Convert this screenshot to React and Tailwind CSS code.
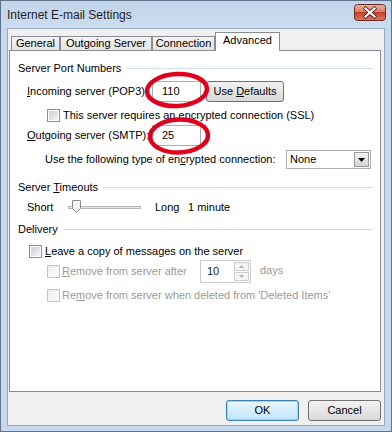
import React from "react";

function Check({ disabled }) {
  if (disabled) {
    return (
      <span className="inline-block w-[13px] h-[13px] border border-[#c4c4c4] bg-gradient-to-br from-[#f0f0f0] to-[#fbfbfb] shrink-0" />
    );
  }
  return (
    <span className="inline-flex items-center justify-center w-[13px] h-[13px] border border-[#8e8f8f] bg-white shrink-0">
      <span className="w-[9px] h-[9px] bg-gradient-to-br from-[#cbcfd5] to-[#f6f6f6]" />
    </span>
  );
}

function Group({ children }) {
  return (
    <div className="flex items-center h-4 pr-[7px]">
      <span>{children}</span>
      <div className="flex-1 ml-[5px] h-px bg-[#d5dfe5]" />
    </div>
  );
}

function Tab({ label, width, active }) {
  if (active) {
    return (
      <div
        className={`${width} h-[19px] -mb-px z-10 bg-white border border-b-0 border-[#898c95] flex items-start justify-center pt-[2px]`}
      >
        {label}
      </div>
    );
  }
  return (
    <div
      className={`${width} h-[14px] bg-gradient-to-b from-[#f4f4f4] to-[#e4e4e4] border border-b-0 border-[#898c95] flex items-center justify-center`}
    >
      {label}
    </div>
  );
}

function CloseButton() {
  return (
    <svg className="ml-auto mt-[3px] shrink-0" width="32" height="17" viewBox="0 0 32 17">
      <defs>
        <linearGradient id="closeGrad" x1="0" y1="0" x2="0" y2="1">
          <stop offset="0" stopColor="#ecb4a4" />
          <stop offset="0.45" stopColor="#d9806a" />
          <stop offset="0.5" stopColor="#c2412b" />
          <stop offset="1" stopColor="#dc7a60" />
        </linearGradient>
      </defs>
      <rect x="0.5" y="0.5" width="31" height="16" rx="3" fill="url(#closeGrad)" stroke="#6e2a22" />
      <path d="M11.5 4.5 L20.5 12.5 M20.5 4.5 L11.5 12.5" stroke="#5b2019" strokeWidth="3.8" strokeLinecap="square" />
      <path d="M11.5 4.5 L20.5 12.5 M20.5 4.5 L11.5 12.5" stroke="#ffffff" strokeWidth="2.2" strokeLinecap="square" />
    </svg>
  );
}

export default function App() {
  return (
    <div className="relative w-[392px] h-[432px] bg-[#c6d8ec] border border-[#5f7289] flex flex-col font-['Liberation_Sans',sans-serif] text-[11px] text-black leading-none">
      {/* title bar */}
      <div className="h-[27px] flex items-start pl-[6px] pr-[5px] bg-gradient-to-b from-[#c0d4ea] to-[#cbdcee]">
        <span className="mt-[8px] text-[12px] text-[#1e1e1e]">Internet E-mail Settings</span>
        <CloseButton />
      </div>

      {/* client area */}
      <div className="flex-1 mx-[6px] mb-[5px] border border-[#97aac0] bg-[#f0f0f0] flex flex-col pt-[3px]">
        <div className="flex items-end h-[18px] pl-[3px]">
          <Tab label="General" width="w-[49px]" />
          <Tab label="Outgoing Server" width="w-[92px]" />
          <Tab label="Connection" width="w-[63px]" />
          <Tab label="Advanced" width="w-[65px]" active />
        </div>

        <div className="ml-px mr-[3px] h-[342px] bg-white border border-[#898c95] flex flex-col pl-[8px] pt-[9px]">
          <Group>Server Port Numbers</Group>

          <div className="flex items-center h-[22px] mt-[4px] ml-[9px]">
            <span className="w-[125px]">
              <u>I</u>ncoming server (POP3):
            </span>
            <div className="w-[49px] h-[21px] border border-[#abadb3] flex items-center pl-[9px]">110</div>
            <button className="ml-[5px] w-[78px] h-[21px] rounded-[3px] border border-[#707070] bg-gradient-to-b from-[#f2f2f2] to-[#d9d9d9]">
              Use <u>D</u>efaults
            </button>
          </div>

          <div className="flex items-center h-[18px] mt-[4px] ml-[29px]">
            <Check />
            <span className="ml-[3px]">This server requires an encrypted connection (SSL)</span>
          </div>

          <div className="flex items-center h-[22px] ml-[9px]">
            <span className="w-[125px]">
              <u>O</u>utgoing server (SMTP):
            </span>
            <div className="w-[49px] h-[21px] border border-[#abadb3] flex items-center pl-[9px]">25</div>
          </div>

          <div className="flex items-center h-[19px] mt-[4px] ml-[27px]">
            <span className="w-[241px]">
              Use the following type of en<u>c</u>rypted connection:
            </span>
            <div className="w-[85px] h-[19px] border border-[#abadb3] flex items-center pl-[3px] pr-px">
              <span>None</span>
              <div className="ml-auto w-[15px] h-[15px] border border-[#9a9a9a] bg-gradient-to-b from-[#f2f2f2] to-[#d4d4d4] flex items-center justify-center">
                <svg width="7" height="4" viewBox="0 0 7 4">
                  <path d="M0 0 H7 L3.5 4 Z" fill="#000" />
                </svg>
              </div>
            </div>
          </div>

          <div className="mt-[10px]">
            <Group>
              Server <u>T</u>imeouts
            </Group>
          </div>

          <div className="flex items-center h-4 mt-[4px] ml-[9px]">
            <span className="w-[41px]">Short</span>
            <div className="relative w-[73px] h-[12px] flex items-center">
              <div className="w-full h-[3px] border border-[#b8b8b8] bg-[#e8e8e8]" />
              <svg className="absolute left-[4px] top-[-1px]" width="9" height="13" viewBox="0 0 9 13">
                <path d="M0.5 0.5 H8.5 V8.5 L4.5 12.5 L0.5 8.5 Z" fill="#f4f4f4" stroke="#8a8a8a" />
              </svg>
            </div>
            <span className="ml-[14px] w-[33px]">Long</span>
            <span>1 minute</span>
          </div>

          <div className="mt-[6px]">
            <Group>Delivery</Group>
          </div>

          <div className="flex items-center h-4 mt-[6px] ml-[11px]">
            <Check />
            <span className="ml-[3px]">
              <u>L</u>eave a copy of messages on the server
            </span>
          </div>

          <div className="flex items-center h-[23px] mt-[1px] ml-[29px] text-[#9a9a9a]">
            <Check disabled />
            <span className="ml-[2px] w-[138px]">
              <u>R</u>emove from server after
            </span>
            <div className="w-[51px] h-[23px] border border-[#c9cbcf] flex items-center pl-[6px] pr-px text-[#1a1a1a]">
              <span>10</span>
              <div className="ml-auto w-[15px] h-[19px] flex flex-col gap-px">
                <div className="flex-1 border border-[#cfcfcf] bg-[#f4f4f4] flex items-center justify-center">
                  <svg width="5" height="3" viewBox="0 0 5 3">
                    <path d="M0 3 H5 L2.5 0 Z" fill="#b0b0b0" />
                  </svg>
                </div>
                <div className="flex-1 border border-[#cfcfcf] bg-[#f4f4f4] flex items-center justify-center">
                  <svg width="5" height="3" viewBox="0 0 5 3">
                    <path d="M0 0 H5 L2.5 3 Z" fill="#b0b0b0" />
                  </svg>
                </div>
              </div>
            </div>
            <span className="ml-[9px] -mt-[3px]">days</span>
          </div>

          <div className="flex items-center h-4 mt-[4px] ml-[29px] text-[#9a9a9a]">
            <Check disabled />
            <span className="ml-[2px]">
              Re<u>m</u>ove from server when deleted from 'Deleted Items'
            </span>
          </div>
        </div>

        <div className="flex justify-end gap-[9px] mt-[8px] mr-[3px]">
          <button className="w-[73px] h-[21px] rounded-[3px] border border-[#3c7fb1] bg-gradient-to-b from-[#eaf6fd] to-[#bee6fd] shadow-[inset_0_0_0_1px_#9ad5f5]">
            OK
          </button>
          <button className="w-[73px] h-[21px] rounded-[3px] border border-[#707070] bg-gradient-to-b from-[#f2f2f2] to-[#d9d9d9]">
            Cancel
          </button>
        </div>
      </div>

      {/* red annotation circles */}
      <svg className="absolute left-0 top-0 pointer-events-none" width="392" height="432" viewBox="0 0 392 432">
        <ellipse cx="176" cy="89" rx="30" ry="16" fill="none" stroke="#e1001c" strokeWidth="4.5" transform="rotate(-3 176 89)" />
        <ellipse cx="178" cy="135" rx="29" ry="16.5" fill="none" stroke="#e1001c" strokeWidth="4.5" transform="rotate(-2 178 135)" />
      </svg>
    </div>
  );
}
